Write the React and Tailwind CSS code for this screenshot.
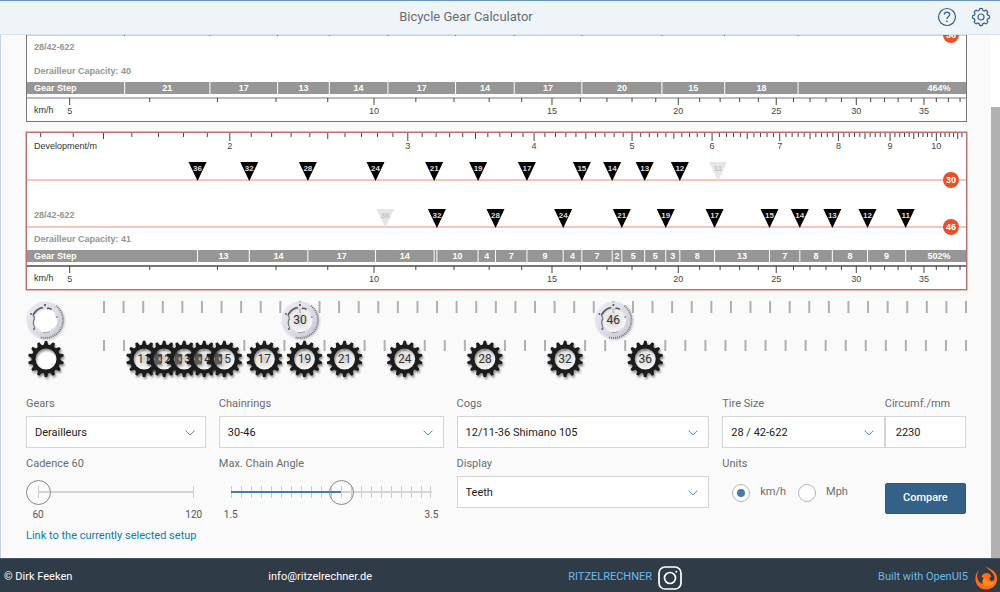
// Bicycle gear calculator page
import React, { useState } from 'react';

const CHART_WIDTH = 943;
const PX_PER_LN = 439;
const CIRCUMFERENCE = 2.23;

// both chart scales are logarithmic
const developmentX = (meters) => 204.8 + PX_PER_LN * Math.log(meters / 2);
const speedX = (kmh) => 44.7 + PX_PER_LN * Math.log(kmh / 5);

const developmentTicks = Array.from({ length: 94 }, (_, i) => 13 + i);
const speedTicks = Array.from({ length: 34 }, (_, i) => 5 + i);

const setups = [
  {
    id: 'first',
    tire: '28/42-622',
    capacity: 40,
    selected: false,
    rings: [
      { teeth: 36, y: 72, cogs: [51, 42, 36, 32, 28, 24, 21, 18, 15, 13, 11], crossed: [] }
    ]
  },
  {
    id: 'second',
    tire: '28/42-622',
    capacity: 41,
    selected: true,
    rings: [
      { teeth: 30, y: 49, cogs: [36, 32, 28, 24, 21, 19, 17, 15, 14, 13, 12, 11], crossed: [11] },
      { teeth: 46, y: 96, cogs: [36, 32, 28, 24, 21, 19, 17, 15, 14, 13, 12, 11], crossed: [36] }
    ]
  }
];

const GearChart = ({ setup }) => {
  const ratios = setup.rings
    .flatMap((ring) => ring.cogs.filter((c) => !ring.crossed.includes(c)).map((c) => ring.teeth / c))
    .sort((a, b) => a - b);
  const range = Math.round((ratios[ratios.length - 1] / ratios[0]) * 100);

  return (
    <svg
      viewBox={`0 0 ${CHART_WIDTH} 160`}
      className="block w-full shrink-0 font-['Liberation_Sans',Arial,sans-serif]"
      role="img"
      aria-label={`Gear chart ${setup.tire}`}
    >
      <rect x="1.5" y="1.5" width="940" height="157" fill="#fff" stroke={setup.selected ? '#a88' : '#777'} />

      {/* Development scale, only the selected chart is numbered */}
      {developmentTicks.map((t) => {
        const x = developmentX(t / 10);
        const end = t % 10 === 0 ? 10 : t % 5 === 0 ? 8 : 6;
        return <line key={t} x1={x} x2={x} y1="2" y2={end} stroke="#444" />;
      })}
      {setup.selected && (
        <g fontSize="9">
          {[2, 3, 4, 5, 6, 7, 8, 9, 10].map((m) => (
            <text key={m} x={developmentX(m)} y="18" textAnchor="middle" fill="#444">{m}</text>
          ))}
          <text x="9" y="18" fill="#333">Development/m</text>
        </g>
      )}

      {/* Chainring lines with one marker for each cog */}
      {setup.rings.map((ring) => (
        <g key={ring.teeth}>
          <line x1="2" x2="941" y1={ring.y} y2={ring.y} stroke="#ee8a74" />
          {ring.cogs.map((cog) => {
            const x = developmentX((ring.teeth / cog) * CIRCUMFERENCE);
            const crossed = ring.crossed.includes(cog);
            return (
              <g key={cog}>
                <path
                  d={`M${x - 9} ${ring.y - 18}h18l-9 19z`}
                  fill={crossed ? '#e6e6e6' : '#000'}
                />
                {setup.selected && (
                  <text
                    x={x}
                    y={ring.y - 9}
                    textAnchor="middle"
                    fontSize="8"
                    fontWeight="bold"
                    fill={crossed ? '#c4c4c4' : '#ddd'}
                  >
                    {cog}
                  </text>
                )}
              </g>
            );
          })}
          <circle cx="926" cy={ring.y} r="8" fill="#e6502b" />
          <text x="926" y={ring.y + 3} textAnchor="middle" fontSize="9" fontWeight="bold" fill="#fff">{ring.teeth}</text>
        </g>
      ))}
      <text x="9" y="87" fill="#959595" fontSize="9" fontWeight="bold">{setup.tire}</text>
      <text x="9" y="111" fill="#959595" fontSize="9" fontWeight="bold">Derailleur Capacity: {setup.capacity}</text>

      {/* Gear steps */}
      <rect x="2" y="119" width="939" height="12" fill="#969696" />
      <text x="9" y="128" fill="#fff" fontSize="9" fontWeight="bold">Gear Step</text>
      {ratios.map((ratio, i) => {
        const x = developmentX(ratio * CIRCUMFERENCE);
        const next = ratios[i + 1];
        const nextX = next ? developmentX(next * CIRCUMFERENCE) : x;
        return (
          <g key={ratio}>
            <line x1={x} x2={x} y1="119" y2="131" stroke="#fff" />
            {nextX - x > 6 && (
              <text x={(x + nextX) / 2} y="128" textAnchor="middle" fill="#fff" fontSize="9" fontWeight="bold">
                {Math.round((next / ratio - 1) * 100)}
              </text>
            )}
          </g>
        );
      })}
      <text x="914" y="128" textAnchor="middle" fill="#fff" fontSize="9" fontWeight="bold">{range}%</text>

      {/* Speed scale */}
      <line x1="2" x2="941" y1="135" y2="135" stroke="#777" strokeWidth={setup.selected ? 2 : 1} />
      {speedTicks.map((v) => (
        <line key={v} x1={speedX(v)} x2={speedX(v)} y1="135" y2={v % 5 === 0 ? 142 : 139} stroke="#444" />
      ))}
      {[5, 10, 15, 20, 25, 30, 35].map((v) => (
        <text key={v} x={speedX(v)} y="151" textAnchor="middle" fill="#444" fontSize="9">{v}</text>
      ))}
      <text x="9" y="150" fill="#333" fontSize="9">km/h</text>

      {setup.selected && (
        <rect x="1" y="1" width="941" height="158" fill="none" stroke="#c9504f" strokeOpacity=".8" />
      )}
    </svg>
  );
};

const cogOutline = Array.from({ length: 14 }, (_, i) => {
  const step = (Math.PI * 2) / 14;
  return [[-0.36, 14.5], [-0.14, 18], [0.16, 18], [0.32, 14.5]]
    .map(([shift, r]) => {
      const a = (i + shift) * step;
      return `${(Math.sin(a) * r).toFixed(2)},${(-Math.cos(a) * r).toFixed(2)}`;
    })
    .join('L');
}).join('L');

const Cog = ({ x, teeth }) => (
  <g transform={`translate(${x} 68)`}>
    <circle r="11" fill={teeth ? 'url(#hole)' : '#fff'} />
    <path
      d={`M${cogOutline}ZM-10.5 0a10.5 10.5 0 1 0 21 0a10.5 10.5 0 1 0 -21 0Z`}
      fill="#1d1d1d"
      fillRule="evenodd"
      filter="url(#shadow)"
    />
    <text y="4" textAnchor="middle" fontSize="12" fill="#333">{teeth}</text>
  </g>
);

const Chainring = ({ x, teeth }) => (
  <g transform={`translate(${x} 29)`}>
    <circle r="12.5" fill={teeth ? 'url(#hole)' : '#fff'} />
    <g filter="url(#softShadow)">
      <circle r="15" fill="none" stroke="url(#silver)" strokeWidth="5" />
      <circle r="18" fill="none" stroke="#cfd0dc" strokeWidth="1" strokeDasharray="1 1" />
      <path d="M11 -14.300A18 18 0 0 1 -5 17.300" fill="none" stroke="#777984" strokeWidth="2" strokeDasharray="1 1" />
    </g>
    {[0, 72, 144, 216, 288].map((angle) => (
      <path key={angle} transform={`rotate(${angle})`} d="M-4 -13.500Q-2.500 -13 -2 -11.500Q0 -10 2 -11.500Q2.500 -13 4 -13.500Z" fill="#dfe0ea" />
    ))}
    <path d="M-12 -4.500Q-10 -9.500 -4.500 -12L-2 -12.300M2 -11.500Q5 -12.300 6.500 -10.500" fill="none" stroke="#55565f" strokeWidth="1.500" />
    <path d="M-12 -4.500Q-10.500 -3.500 -10.500 -1Q-13 2 -10 8.500" fill="none" stroke="#777984" strokeWidth="1.200" />
    <path d="M-2 12.500Q2 13 5 11.500" fill="none" stroke="#a3a4b0" strokeWidth="1" />
    <circle cx="0" cy="-15" r="1" fill="#444" />
    <circle cx="-14" cy="-6" r="1" fill="#666" />
    <circle cx="-11" cy="9" r="1" fill="#666" />
    <circle cx="12" cy="-3" r="1" fill="#999" />
    <text y="4" textAnchor="middle" fontSize="12" fill="#333">{teeth}</text>
  </g>
);

const ringX = (teeth) => 79 + ((teeth - 20) * 862) / 44;
const cogX = (teeth) => 79 + ((teeth - 9) * 862) / 43;

const GearRails = () => (
  <svg
    viewBox={`0 0 ${CHART_WIDTH} 104`}
    className="block w-full shrink-0 font-[Roboto,'Liberation_Sans',sans-serif]"
    role="img"
    aria-label="Chainrings and cogs"
  >
    <defs>
      <radialGradient id="hole">
        <stop offset="0" stopColor="#a5a5a5" stopOpacity=".55" />
        <stop offset=".6" stopColor="#ccc" stopOpacity=".35" />
        <stop offset="1" stopColor="#fff" stopOpacity=".4" />
      </radialGradient>
      <linearGradient id="silver" x1="0" y1="0" x2="1" y2="1">
        <stop offset="0" stopColor="#e9e9f2" />
        <stop offset=".5" stopColor="#dcdde8" />
        <stop offset="1" stopColor="#c9cad6" />
      </linearGradient>
      <filter id="shadow" x="-20%" y="-20%" width="150%" height="150%">
        <feDropShadow dx="1" dy="2" stdDeviation="1" floodColor="#000" floodOpacity=".45" />
      </filter>
      <filter id="softShadow" x="-20%" y="-20%" width="150%" height="150%">
        <feDropShadow dx="1" dy="1" stdDeviation="1" floodColor="#000" floodOpacity=".25" />
      </filter>
    </defs>
    {Array.from({ length: 45 }, (_, i) => (
      <line key={i} x1={ringX(20 + i)} x2={ringX(20 + i)} y1="10" y2="22" stroke="#b0b0b0" strokeWidth="2" />
    ))}
    {Array.from({ length: 44 }, (_, i) => (
      <line key={i} x1={cogX(9 + i)} x2={cogX(9 + i)} y1="49" y2="60" stroke="#b0b0b0" strokeWidth="2" />
    ))}
    <Chainring x={20} />
    {[30, 46].map((teeth) => (
      <Chainring key={teeth} x={ringX(teeth)} teeth={teeth} />
    ))}
    <Cog x={21} />
    {[11, 12, 13, 14, 15, 17, 19, 21, 24, 28, 32, 36].map((teeth) => (
      <Cog key={teeth} x={cogX(teeth)} teeth={teeth} />
    ))}
  </svg>
);

const labelClass = 'block h-4 leading-[18px] text-[#6a6d70]';

const SelectField = ({ id, label, options, className = '' }) => (
  <div className={className}>
    <label htmlFor={id} className={labelClass}>{label}</label>
    <div className="relative mt-[5px]">
      <select
        id={id}
        className="block h-8 w-full appearance-none border border-[#d5d5d5] bg-white pt-0.5 pr-8 pl-2 text-[#222]"
      >
        {options.map((option) => (
          <option key={option}>{option}</option>
        ))}
      </select>
      <svg
        viewBox="0 0 10 6"
        className="pointer-events-none absolute top-[14px] right-[11px] w-[10px] fill-none stroke-[#5f8cb4]"
        aria-hidden="true"
      >
        <path d="M.5 .5L5 5L9.500 .5" />
      </svg>
    </div>
  </div>
);

const SliderField = ({ id, label, min, max, step, value, onChange, tickCount }) => {
  const percent = ((value - min) / (max - min)) * 100;

  return (
    <div>
      <label htmlFor={id} className={labelClass}>{label}</label>
      <div className="relative mt-[5px] h-8">
        <div className="absolute inset-x-3 top-[10px] flex h-3 justify-between">
          {Array.from({ length: tickCount }, (_, i) => (
            <span key={i} className="w-px bg-[#ccc]" />
          ))}
        </div>
        <div className="absolute inset-x-3 top-[15px] h-[2px] bg-[#d5d5d5]">
          <div className="h-full bg-[#427cac]" style={{ width: `${percent}%` }} />
        </div>
        <input
          id={id}
          type="range"
          min={min}
          max={max}
          step={step}
          value={value}
          onChange={(e) => onChange(Number(e.target.value))}
          className="relative block h-8 w-full appearance-none bg-transparent [&::-webkit-slider-thumb]:size-[25px] [&::-webkit-slider-thumb]:appearance-none [&::-webkit-slider-thumb]:rounded-full [&::-webkit-slider-thumb]:border [&::-webkit-slider-thumb]:border-[#888] [&::-webkit-slider-thumb]:bg-transparent"
        />
      </div>
      <div className="flex h-3 justify-between text-[10px] leading-[14px] text-[#555]">
        <span className="w-6 text-center">{min}</span>
        <span className="w-6 text-center">{max}</span>
      </div>
    </div>
  );
};

const radioClass =
  "grid size-[18px] appearance-none place-items-center rounded-full border border-[#b5b5b5] bg-white checked:before:size-2 checked:before:rounded-full checked:before:bg-[#427cac] checked:before:content-['']";

const gearIconPath = Array.from({ length: 8 }, (_, i) => {
  const point = (shift, r) => {
    const a = ((i + shift) * Math.PI) / 4;
    return `${(10 + Math.sin(a) * r).toFixed(2)} ${(10 - Math.cos(a) * r).toFixed(2)}`;
  };
  return `${i === 0 ? 'M' : 'L'}${point(-0.28, 7.2)}L${point(-0.24, 8.3)}Q${point(0, 9)} ${point(0.24, 8.3)}L${point(0.28, 7.2)}Q${point(0.5, 6.3)} ${point(0.72, 7.2)}`;
}).join('');

const App = () => {
  const [cadence, setCadence] = useState(60);
  const [chainAngle, setChainAngle] = useState(2.6);
  const [units, setUnits] = useState('kmh');
  const [circumference, setCircumference] = useState('2230');

  return (
    <div className="flex h-screen flex-col bg-[#fafafa] font-[Roboto,'Liberation_Sans',sans-serif] text-[11px]">
      <header className="flex h-[35px] shrink-0 items-center border-t border-b border-t-[#6897c4] border-b-[#d3e3f0] bg-[#eff4f9] pb-0.5">
        <h1 className="flex-1 text-center text-[13px] text-[#6a6d70]">Bicycle Gear Calculator</h1>
        <div className="flex w-[68px] items-center gap-3.5 pl-[5px] text-[#346187]">
          <button type="button" aria-label="Help">
            <svg viewBox="0 0 20 20" className="size-5 fill-none stroke-current" aria-hidden="true">
              <circle cx="10" cy="10" r="8.500" strokeWidth="1.200" />
              <path d="M7.300 7.600C7.300 4.200 12.700 4.200 12.700 7.600C12.700 9.600 10 9.600 10 12" strokeWidth="1.300" />
              <circle cx="10" cy="14.300" r=".5" />
            </svg>
          </button>
          <button type="button" aria-label="Settings">
            <svg viewBox="0 0 20 20" className="size-5 fill-none stroke-current" strokeWidth="1.200" strokeLinejoin="round" aria-hidden="true">
              <path d={`${gearIconPath}Z`} />
              <circle cx="10" cy="10" r="3" />
            </svg>
          </button>
        </div>
      </header>

      <div className="flex min-h-0 flex-1 border-l border-[#c3d3e3]">
        {/* Content is scrolled to its end */}
        <main className="flex min-w-0 flex-1 flex-col justify-end overflow-hidden pr-[23px] pl-6">
          <div className="flex shrink-0 flex-col gap-2">
            {setups.map((setup) => (
              <GearChart key={setup.id} setup={setup} />
            ))}
          </div>
          <GearRails />

          <form className="shrink-0 pr-0.5 pb-[14px] pl-px" onSubmit={(e) => e.preventDefault()}>
            <div className="grid grid-cols-[180fr_225fr_253fr_244fr] gap-x-[13px] gap-y-[7px]">
              <SelectField id="gears" label="Gears" options={['Derailleurs', 'Internal Gear Hub']} />
              <SelectField id="chainrings" label="Chainrings" options={['30-46']} />
              <SelectField id="cogs" label="Cogs" options={['12/11-36 Shimano 105']} />
              <div className="flex">
                <SelectField id="tire" label="Tire Size" options={['28 / 42-622']} className="w-2/3" />
                <div className="w-1/3">
                  <label htmlFor="circumference" className={labelClass}>Circumf./mm</label>
                  <input
                    id="circumference"
                    type="text"
                    value={circumference}
                    onChange={(e) => setCircumference(e.target.value)}
                    className="mt-[5px] block h-8 w-full border border-[#d5d5d5] bg-white px-2.5 text-[#222]"
                  />
                </div>
              </div>

              <SliderField
                id="cadence"
                label={`Cadence ${cadence}`}
                min={60}
                max={120}
                step={1}
                value={cadence}
                onChange={setCadence}
                tickCount={2}
              />
              <SliderField
                id="angle"
                label="Max. Chain Angle"
                min={1.5}
                max={3.5}
                step={0.1}
                value={chainAngle}
                onChange={setChainAngle}
                tickCount={21}
              />
              <SelectField id="display" label="Display" options={['Teeth', 'Development']} />
              <div className="flex items-start">
                <fieldset className="w-2/3">
                  <legend className={labelClass}>Units</legend>
                  <div className="mt-[5px] flex h-8 items-center gap-3 pt-px pl-2.5 text-[#6a6d70]">
                    <label className="flex items-center gap-2.5">
                      <input
                        type="radio"
                        name="units"
                        checked={units === 'kmh'}
                        onChange={() => setUnits('kmh')}
                        className={radioClass}
                      />
                      km/h
                    </label>
                    <label className="flex items-center gap-2.5">
                      <input
                        type="radio"
                        name="units"
                        checked={units === 'mph'}
                        onChange={() => setUnits('mph')}
                        className={radioClass}
                      />
                      Mph
                    </label>
                  </div>
                </fieldset>
                <button
                  type="submit"
                  className="mt-7 h-[31px] w-1/3 rounded-xs border border-[#2c567b] bg-[#346187] font-medium text-white"
                >
                  Compare
                </button>
              </div>
            </div>
            <a href="#setup" className="mt-2 block h-4 w-fit leading-4 text-[#0a7ab8]">
              Link to the currently selected setup
            </a>
          </form>
        </main>
        <div className="w-[9px] shrink-0 bg-white pt-[72px]">
          <div className="h-full bg-[#b1b1b1]" />
        </div>
      </div>

      <footer className="flex h-[34px] shrink-0 items-center justify-between border-t border-[#4a5763] bg-[#2f3c48] pt-1 pr-0.5 pl-1 text-white">
        <span>© Dirk Feeken</span>
        <span>info@ritzelrechner.de</span>
        <a href="#instagram" className="flex items-center gap-1.5 text-[#6cb8ea]">
          RITZELRECHNER
          <svg viewBox="0 0 24 24" className="size-6 fill-none stroke-white" strokeWidth="1.700" aria-hidden="true">
            <rect x="1" y="1" width="22" height="22" rx="6" />
            <circle cx="12" cy="12" r="5.500" />
            <circle cx="18.300" cy="5.700" r="1" fill="#fff" stroke="none" />
          </svg>
        </a>
        <a href="#openui5" className="flex items-center gap-1.5 text-[#6cb8ea]">
          Built with OpenUI5
          <svg viewBox="0 0 24 24" className="size-6" aria-hidden="true">
            <path
              d="M5 4C-1 9 0 23 12 23.500C22 23.500 25 14 22 8C20 4 16 3 12 .5C13.500 4 20.500 6 20.500 12C20.500 14.500 18 16 16.500 14.500C15 13 15.500 11 17.500 10.500C15.500 6 10 6 8 9.500C7 11 8 12 10 12C8 14.500 8 17 9.500 18.500C3 16 1.500 10 5 4Z"
              fill="#ff6a1c"
            />
            <path d="M10 12C8 14.500 8 17 9.500 18.500C13 22 20 20 22 14C20.500 16.500 17.500 17 15.500 16C12.500 15 13 13 10 12Z" fill="#ff8a1a" />
          </svg>
        </a>
      </footer>
    </div>
  );
};

export default App;
